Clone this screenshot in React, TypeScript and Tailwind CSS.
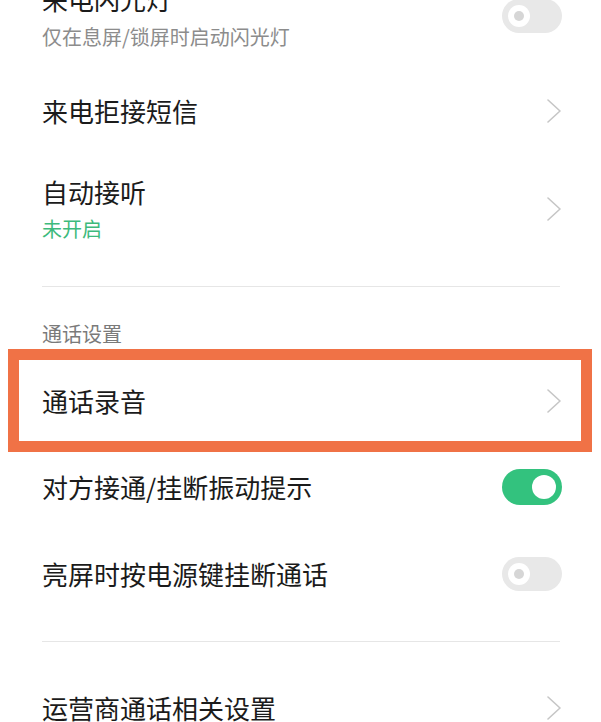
import React from "react";

const font = { fontFamily: '"Noto Sans CJK SC", "Noto Sans", sans-serif' };

function Chevron() {
  return (
    <svg width="14" height="24" viewBox="0 0 14 24" className="shrink-0">
      <path d="M1 1 L13 12 L1 23" fill="none" stroke="#c6c6c6" strokeWidth="1.6" strokeLinecap="round" strokeLinejoin="round" />
    </svg>
  );
}

function ToggleOff() {
  return (
    <div className="w-[60px] h-[34px] rounded-full bg-[#e8e8e8] flex items-center pl-[6px] shrink-0">
      <div className="w-[22px] h-[22px] rounded-full bg-white flex items-center justify-center">
        <div className="w-[10px] h-[10px] rounded-full bg-[#d6d6d6]" />
      </div>
    </div>
  );
}

function ToggleOn() {
  return (
    <div className="w-[60px] h-[36px] rounded-full bg-[#33c27e] flex items-center justify-end pr-[6px] shrink-0">
      <div className="w-[24px] h-[24px] rounded-full bg-white" />
    </div>
  );
}

export default function App() {
  return (
    <div className="w-[601px] h-[722px] bg-white overflow-hidden text-[#1b1b1b]" style={font}>
      {/* Row 1 */}
      <div className="-mt-[17px] flex items-center justify-between pl-[42px] pr-[39px]">
        <div className="flex flex-col">
          <div className="text-[26px] leading-[32px]">来电闪光灯</div>
          <div className="mt-[10px] text-[20px] leading-[24px] text-[#8c8c8c]">仅在息屏/锁屏时启动闪光灯</div>
        </div>
        <ToggleOff />
      </div>

      {/* Row 2 */}
      <div className="mt-[46px] flex items-center justify-between pl-[42px] pr-[40px]">
        <div className="text-[26px] leading-[32px]">来电拒接短信</div>
        <Chevron />
      </div>

      {/* Row 3 */}
      <div className="mt-[49px] flex items-center justify-between pl-[42px] pr-[40px]">
        <div className="flex flex-col">
          <div className="text-[26px] leading-[32px]">自动接听</div>
          <div className="mt-[9px] text-[20px] leading-[24px] text-[#3dba7c]">未开启</div>
        </div>
        <Chevron />
      </div>

      <div className="mt-[45px] ml-[42px] mr-[41px] h-px bg-[#e6e6e6]" />

      <div className="mt-[35px] pl-[42px] text-[20px] leading-[24px] text-[#7a7a7a]">通话设置</div>

      {/* Highlighted row */}
      <div className="mt-[3px] ml-[8px] w-[584px] h-[103px] border-[11px] border-[#f07246] flex items-center justify-between pl-[23px] pr-[20px]">
        <div className="text-[26px] leading-[32px]">通话录音</div>
        <Chevron />
      </div>

      {/* Row vibrate */}
      <div className="mt-[19px] flex items-center justify-between pl-[42px] pr-[39px] h-[32px]">
        <div className="text-[26px] leading-[32px]">对方接通/挂断振动提示</div>
        <ToggleOn />
      </div>

      {/* Row power key */}
      <div className="mt-[55px] flex items-center justify-between pl-[42px] pr-[39px] h-[32px]">
        <div className="text-[26px] leading-[32px]">亮屏时按电源键挂断通话</div>
        <ToggleOff />
      </div>

      <div className="mt-[51px] ml-[42px] mr-[41px] h-px bg-[#e6e6e6]" />

      <div className="mt-[50px] flex items-center justify-between pl-[42px] pr-[40px]">
        <div className="text-[26px] leading-[32px]">运营商通话相关设置</div>
        <Chevron />
      </div>
    </div>
  );
}
